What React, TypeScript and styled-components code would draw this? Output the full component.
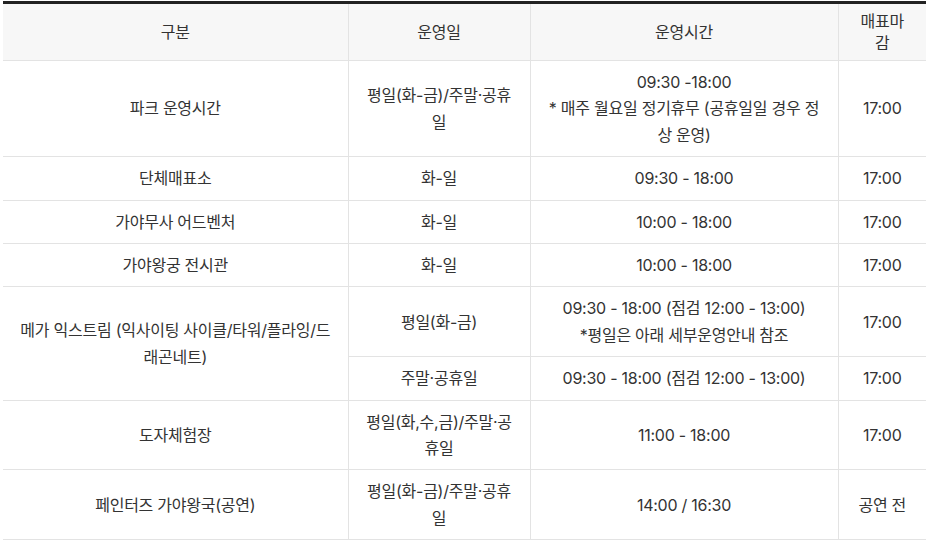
import styled, { createGlobalStyle } from 'styled-components';

const GlobalStyle = createGlobalStyle`
  html, body {
    margin: 0;
    padding: 0;
    background: #ffffff;
    overflow: hidden;
  }

  body {
    font-family: 'Inter', 'Noto Sans CJK KR', sans-serif;
    color: #333333;
  }
`;

const Wrapper = styled.div`
  padding: 1px 0 0 3px;
`;

const Table = styled.table`
  width: 923px;
  border-collapse: collapse;
  table-layout: fixed;
  border-top: 3px solid #222222;
  font-size: 16px;
  letter-spacing: -0.25px;
`;

const HeadCell = styled.th`
  background: #f7f7f7;
  font-weight: 400;
  line-height: 22px;
  height: 44px;
  padding: 6px 15px;
  text-align: center;
  border-bottom: 1px solid #e3e3e3;
  border-left: 1px solid #e3e3e3;

  &:first-child {
    border-left: none;
  }
`;

const Cell = styled.td<{ $first?: boolean }>`
  padding: 8px 15px;
  line-height: 26.4px;
  text-align: center;
  vertical-align: middle;
  border-bottom: 1px solid #e3e3e3;
  border-left: ${({ $first }) => ($first ? 'none' : '1px solid #e3e3e3')};
`;

const rows = [
  { name: '파크 운영시간', day: '평일(화-금)/주말·공휴일', time: ['09:30 -18:00', '* 매주 월요일 정기휴무 (공휴일일 경우 정상 운영)'], close: '17:00' },
  { name: '단체매표소', day: '화-일', time: ['09:30 - 18:00'], close: '17:00' },
  { name: '가야무사 어드벤처', day: '화-일', time: ['10:00 - 18:00'], close: '17:00' },
  { name: '가야왕궁 전시관', day: '화-일', time: ['10:00 - 18:00'], close: '17:00' }
];

const lastRows = [
  { name: '도자체험장', day: '평일(화,수,금)/주말·공휴일', time: ['11:00 - 18:00'], close: '17:00' },
  { name: '페인터즈 가야왕국(공연)', day: '평일(화-금)/주말·공휴일', time: ['14:00 / 16:30'], close: '공연 전' }
];

const TimeLines = ({ lines }: { lines: string[] }) => (
  <>
    {lines.map((line, i) => (
      <div key={i}>{line}</div>
    ))}
  </>
);

const App = () => {
  return (
    <>
      <GlobalStyle />
      <Wrapper>
        <Table>
          <colgroup>
            <col style={{ width: '345px' }} />
            <col style={{ width: '182px' }} />
            <col style={{ width: '308px' }} />
            <col style={{ width: '88px' }} />
          </colgroup>
          <thead>
            <tr>
              <HeadCell>구분</HeadCell>
              <HeadCell>운영일</HeadCell>
              <HeadCell>운영시간</HeadCell>
              <HeadCell>매표마감</HeadCell>
            </tr>
          </thead>
          <tbody>
            {rows.map((row, index) => (
              <tr key={index}>
                <Cell $first>{row.name}</Cell>
                <Cell>{row.day}</Cell>
                <Cell>
                  <TimeLines lines={row.time} />
                </Cell>
                <Cell>{row.close}</Cell>
              </tr>
            ))}
            <tr>
              <Cell $first rowSpan={2}>
                메가 익스트림 (익사이팅 사이클/타워/플라잉/드래곤네트)
              </Cell>
              <Cell>평일(화-금)</Cell>
              <Cell>
                <TimeLines lines={['09:30 - 18:00 (점검 12:00 - 13:00)', '*평일은 아래 세부운영안내 참조']} />
              </Cell>
              <Cell>17:00</Cell>
            </tr>
            <tr>
              <Cell>주말·공휴일</Cell>
              <Cell>09:30 - 18:00 (점검 12:00 - 13:00)</Cell>
              <Cell>17:00</Cell>
            </tr>
            {lastRows.map((row, index) => (
              <tr key={index}>
                <Cell $first>{row.name}</Cell>
                <Cell>{row.day}</Cell>
                <Cell>
                  <TimeLines lines={row.time} />
                </Cell>
                <Cell>{row.close}</Cell>
              </tr>
            ))}
          </tbody>
        </Table>
      </Wrapper>
    </>
  );
};

export default App;
